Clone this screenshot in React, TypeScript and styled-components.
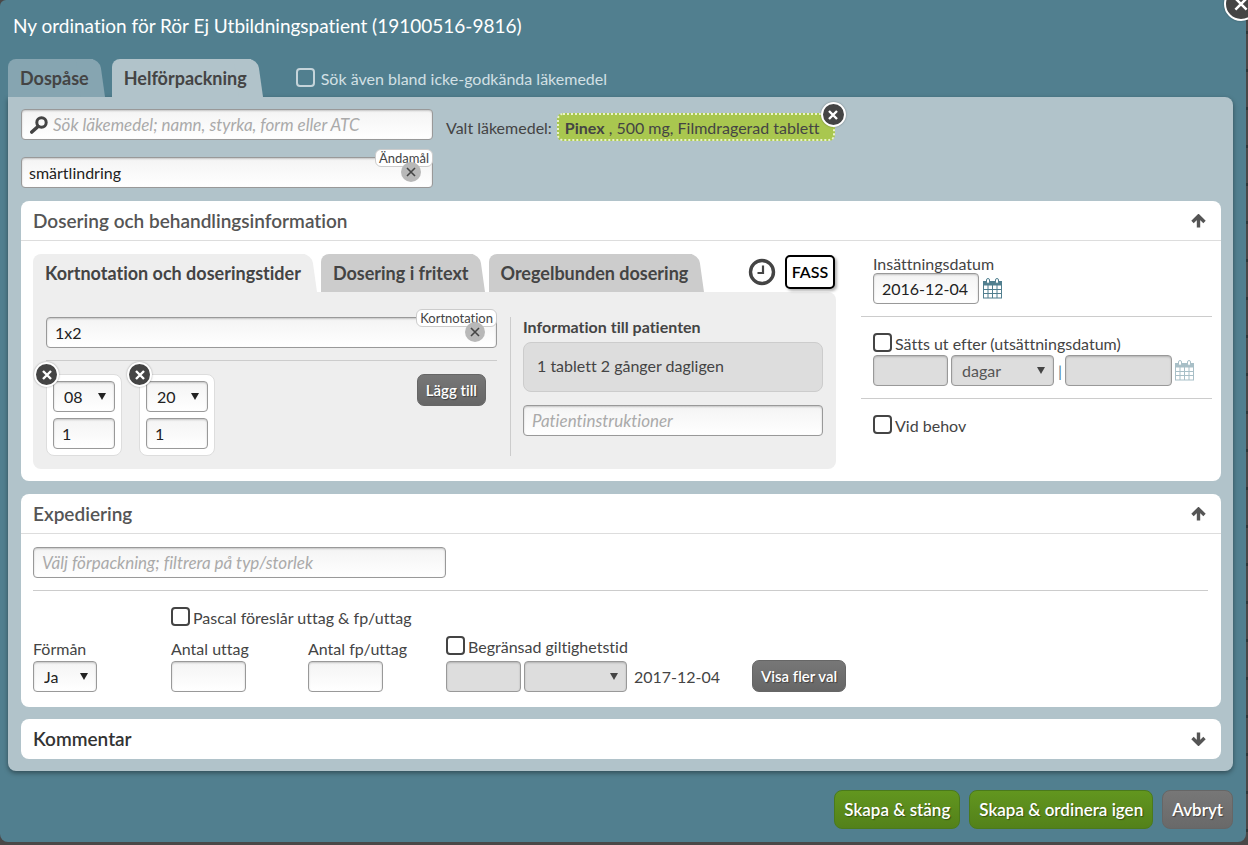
import React from 'react';
import styled, { createGlobalStyle, css } from 'styled-components';

const GlobalStyle = createGlobalStyle`
  *, *::before, *::after { box-sizing: border-box; }
  body {
    margin: 0;
    background: #4a4848;
    color: #444;
    font: 16px/20px Lato, "Liberation Sans", sans-serif;
    font-variant-ligatures: none;
  }
  button, input, select { font: inherit; font-variant-ligatures: none; color: inherit; margin: 0; }
  h1, h2, h3, p { margin: 0; }
`;

const Page = styled.div`
  min-height: 100vh;
  overflow: hidden;
  padding: 0 2px 3px 0;
  background: repeating-linear-gradient(#4a4848 0 31px, #2f3536 31px 34px, #4a4848 34px 38px);
`;

const Dialog = styled.main`
  position: relative;
  background: #517f8f;
  border-radius: 6px 0 8px 8px;
  padding: 0 13px 13px 8px;
`;

const Title = styled.h1`
  padding: 14px 5px 21px;
  font-size: 19px;
  line-height: 24px;
  font-weight: 400;
  color: #fff;
`;

const TabBar = styled.div<{ $gap: number }>`
  display: flex;
  gap: ${p => p.$gap}px;
  height: 38px;
`;

const Tab = styled.button<{ $tone: string }>`
  position: relative;
  z-index: 0;
  height: 38px;
  border: 0;
  background: none;
  padding: 0 16px 0 12px;
  font-size: 18px;
  line-height: 36px;
  font-weight: 700;
  white-space: nowrap;
  &::before, &::after {
    content: '';
    position: absolute;
    z-index: -1;
    top: 0;
    bottom: 0;
    background: ${p => p.$tone};
  }
  &::before { left: 0; right: 12px; border-radius: 8px 0 0 0; }
  &::after {
    right: 0;
    width: 24px;
    border-radius: 0 9px 0 0;
    transform: skewX(8deg);
    transform-origin: bottom;
  }
`;

const TabOption = styled.div`
  margin-left: 26px;
  padding-top: 9px;
  color: #d3e0e5;
`;

const Panel = styled.div`
  background: #b1c3ca;
  border-radius: 0 8px 8px 8px;
  padding: 12px 12px 12px 13px;
  box-shadow: 0 2px 5px rgba(0, 0, 0, 0.4);
`;

const Search = styled.div`
  display: flex;
  gap: 13px;
  margin-bottom: 13px;
`;

const SearchFields = styled.div`
  display: grid;
  gap: 17px;
  width: 412px;
`;

const field = css`
  height: 31px;
  border: 1px solid #999;
  border-radius: 4px;
  background: linear-gradient(#f4f4f4, #fff);
  box-shadow: inset 0 1px 2px rgba(0, 0, 0, 0.2);
  color: #222;
  &:disabled {
    background: #ddd;
    color: #555;
    opacity: 1;
  }
`;

const TextInput = styled.input<{ $width?: number; $inset?: number }>`
  ${field}
  display: block;
  width: ${p => (p.$width ? `${p.$width}px` : '100%')};
  padding: 0 8px 0 ${p => p.$inset ?? 8}px;
  &::placeholder { color: #aaa; font-size: 17px; font-style: italic; opacity: 1; }
`;

const FieldBox = styled.div`
  position: relative;
`;

const SearchGlyph = styled.svg`
  position: absolute;
  left: 9px;
  top: 7px;
`;

const FieldTag = styled.label`
  position: absolute;
  top: -8px;
  right: 0;
  height: 18px;
  padding: 0 3px;
  border: 1px solid #ccc;
  border-radius: 6px;
  background: #fff;
  font-size: 13px;
  line-height: 17px;
`;

const ClearButton = styled.button`
  position: absolute;
  top: 5px;
  right: 12px;
  display: grid;
  place-items: center;
  width: 20px;
  height: 20px;
  padding: 0;
  border: 0;
  border-radius: 50%;
  background: #b8b8b8;
`;

const RoundClose = styled.button`
  position: absolute;
  top: -13px;
  left: -13px;
  display: grid;
  place-items: center;
  width: 25px;
  height: 25px;
  padding: 0;
  border: 2px solid #fff;
  border-radius: 50%;
  background: #444;
  color: #fff;
  box-shadow: 0 0 2px rgba(0, 0, 0, 0.35);
`;

const DrugClose = styled(RoundClose)`
  left: auto;
  right: -13px;
`;

const DialogClose = styled(RoundClose)`
  left: auto;
  right: -12px;
  width: 34px;
  height: 34px;
`;

const Chosen = styled.div`
  display: flex;
  gap: 5px;
  height: 28px;
  margin-top: 4px;
  line-height: 30px;
  white-space: nowrap;
`;

const Drug = styled.div`
  position: relative;
  padding: 0 13px 0 6px;
  border: 2px dotted #e9f3c8;
  border-radius: 6px;
  background: #a9c74f;
  line-height: 26px;
`;

const Section = styled.section<{ $gap?: number }>`
  margin-bottom: ${p => p.$gap ?? 0}px;
  border-radius: 8px;
  background: #fff;
`;

const SectionHead = styled.header<{ $open?: boolean }>`
  display: flex;
  align-items: center;
  justify-content: space-between;
  height: 40px;
  padding: 0 15px 0 12px;
  border-bottom: ${p => (p.$open ? '1px solid #ddd' : '0')};
`;

const SectionTitle = styled.h2<{ $dark?: boolean }>`
  font-size: 19px;
  line-height: 24px;
  font-weight: 600;
  color: ${p => (p.$dark ? '#333' : '#555')};
`;

const IconButton = styled.button`
  display: grid;
  place-items: center;
  padding: 0;
  border: 0;
  background: none;
`;

const Dosage = styled.div`
  display: grid;
  grid-template-columns: minmax(0, 1fr) 351px;
  gap: 25px;
  padding: 13px 9px 12px 12px;
`;

const TabTools = styled.div`
  display: flex;
  align-items: center;
  gap: 9px;
  height: 36px;
  margin-left: auto;
  padding-right: 1px;
`;

const Fass = styled.button`
  width: 50px;
  height: 34px;
  padding: 0;
  border: 2px solid #000;
  border-radius: 5px;
  background: #fff;
  box-shadow: 2px 2px 3px rgba(0, 0, 0, 0.3);
  color: #000;
  font-weight: 600;
`;

const DosePanel = styled.div`
  display: grid;
  grid-template-columns: minmax(0, 1fr) 313px;
  gap: 13px;
  padding: 25px 13px 13px;
  border-radius: 0 8px 8px 8px;
  background: #eee;
`;

const Rule = styled.hr<{ $below?: number }>`
  width: 100%;
  height: 1px;
  margin: 12px 0 ${p => p.$below ?? 13}px;
  border: 0;
  background: #ccc;
`;

const DoseRow = styled.div`
  display: flex;
  align-items: flex-start;
  gap: 17px;
`;

const DoseCard = styled.div`
  position: relative;
  display: grid;
  gap: 6px;
  padding: 6px;
  border: 1px solid #ddd;
  border-radius: 8px;
  background: #fff;
`;

const SelectBox = styled.div<{ $disabled?: boolean }>`
  position: relative;
  &::after {
    content: '';
    position: absolute;
    right: 9px;
    top: 12px;
    border: 4px solid transparent;
    border-top: 7px solid ${p => (p.$disabled ? '#444' : '#222')};
    border-bottom: 0;
    pointer-events: none;
  }
`;

const Select = styled.select<{ $width: number }>`
  ${field}
  display: block;
  appearance: none;
  width: ${p => p.$width}px;
  padding: 0 18px 0 10px;
`;

const GreyButton = styled.button`
  height: 32px;
  padding: 0 8px;
  border: 1px solid #666;
  border-radius: 7px;
  background: linear-gradient(#777, #666);
  color: #fff;
  font-size: 15px;
  font-weight: 600;
  text-shadow: 1px 1px 1px rgba(0, 0, 0, 0.4);
  white-space: nowrap;
`;

const AddButton = styled(GreyButton)`
  margin: 0 11px 0 auto;
`;

const PatientInfo = styled.div`
  padding-left: 12px;
  border-left: 1px solid #ccc;
`;

const InfoTitle = styled.h3`
  font-size: 16px;
  line-height: 20px;
  font-weight: 700;
  margin-bottom: 5px;
`;

const InfoText = styled.p`
  margin-bottom: 13px;
  padding: 13px 13px 15px;
  border: 1px solid #ccc;
  border-radius: 8px;
  background: #ddd;
`;

const Dates = styled.div`
  display: flex;
  flex-direction: column;
`;

const DateGroup = styled.div`
  padding-left: 12px;
`;

const Controls = styled.div<{ $gap?: number }>`
  display: flex;
  align-items: center;
  gap: ${p => p.$gap ?? 3}px;
`;

const Label = styled.label`
  display: block;
  height: 19px;
  white-space: nowrap;
`;

const CheckLabel = styled.label<{ $gap?: number }>`
  display: flex;
  align-items: flex-start;
  gap: ${p => p.$gap ?? 3}px;
  height: 22px;
  line-height: 22px;
  white-space: nowrap;
`;

const Check = styled.input<{ $light?: boolean }>`
  appearance: none;
  width: 19px;
  height: 19px;
  border: 2px solid ${p => (p.$light ? '#c5d4da' : '#444')};
  border-radius: 4px;
  background: ${p => (p.$light ? 'transparent' : '#fff')};
  &:checked { background: #517f8f; }
`;

const Bar = styled.span`
  padding-left: 1px;
  color: #517f8f;
`;

const Dispense = styled.div`
  padding: 13px 13px 15px 12px;
`;

const DispenseGrid = styled.div`
  display: grid;
  grid-template-columns: 138px 137px 138px 306px 1fr;
  align-items: end;
  justify-items: start;
`;

const Suggest = styled.div`
  grid-column: 2 / -1;
  margin-bottom: 7px;
`;

const Stack = styled.div`
  display: grid;
  gap: 3px;
`;

const Until = styled.span`
  padding-left: 4px;
`;

const Footer = styled.footer`
  display: flex;
  justify-content: flex-end;
  gap: 9px;
  padding-top: 19px;
`;

const Action = styled.button<{ $green?: boolean }>`
  height: 39px;
  padding: 0 9px;
  border: 1px solid ${p => (p.$green ? '#4a7a1c' : '#666')};
  border-radius: 8px;
  background: ${p => (p.$green ? 'linear-gradient(#62961f, #53811a)' : 'linear-gradient(#777, #696969)')};
  color: #fff;
  font-size: 17px;
  font-weight: 600;
  text-shadow: 1px 1px 1px rgba(0, 0, 0, 0.4);
  white-space: nowrap;
`;

const Cross = ({ size = 10, weight = 2.4 }: { size?: number; weight?: number }) => (
  <svg width={size} height={size} viewBox="0 0 10 10" aria-hidden="true">
    <path d="M1 1L9 9M9 1L1 9" stroke="currentColor" strokeWidth={weight} fill="none" />
  </svg>
);

const Arrow = ({ down }: { down?: boolean }) => (
  <svg width="15" height="14" viewBox="0 0 15 14" aria-hidden="true">
    <path
      d={down ? 'M7.5 0.5V12M1.5 6L7.5 12L13.5 6' : 'M7.5 13.5V2M1.5 8L7.5 2L13.5 8'}
      stroke="#555"
      strokeWidth="3.4"
      fill="none"
    />
  </svg>
);

const Calendar = ({ color }: { color: string }) => (
  <svg width="20" height="21" viewBox="0 0 20 21" aria-hidden="true">
    <rect x="0.5" y="3.5" width="18" height="16.5" fill="#fff" stroke={color} />
    <path d="M0 3H19V7.5H0Z" fill={color} />
    <path d="M0 11.5H19M0 15.5H19M5 7V20M9.5 7V20M14 7V20" stroke={color} />
    <rect x="3.5" y="0.5" width="3" height="5" rx="1.5" fill="#fff" stroke={color} />
    <rect x="12.5" y="0.5" width="3" height="5" rx="1.5" fill="#fff" stroke={color} />
  </svg>
);

export default function App() {
  return (
    <>
      <GlobalStyle />
      <Page>
        <Dialog>
          <DialogClose aria-label="Stäng"><Cross size={14} weight={1.8} /></DialogClose>
          <Title>Ny ordination för Rör Ej Utbildningspatient (19100516-9816)</Title>
          <TabBar $gap={7}>
            <Tab $tone="#86a5b1">Dospåse</Tab>
            <Tab $tone="#b1c3ca">Helförpackning</Tab>
            <TabOption>
              <CheckLabel $gap={6}>
                <Check type="checkbox" $light />
                Sök även bland icke-godkända läkemedel
              </CheckLabel>
            </TabOption>
          </TabBar>
          <Panel>
            <Search>
              <SearchFields>
                <FieldBox>
                  <TextInput $inset={31} aria-label="Sök läkemedel" placeholder="Sök läkemedel; namn, styrka, form eller ATC" />
                  <SearchGlyph width="19" height="18" viewBox="0 0 19 18" aria-hidden="true">
                    <circle cx="11.5" cy="6.5" r="4.7" stroke="#444" strokeWidth="3" fill="none" />
                    <path d="M8 10.5L1.8 16" stroke="#444" strokeWidth="3.6" strokeLinecap="round" />
                  </SearchGlyph>
                </FieldBox>
                <FieldBox>
                  <TextInput id="purpose" $inset={7} defaultValue="smärtlindring" />
                  <FieldTag htmlFor="purpose">Ändamål</FieldTag>
                  <ClearButton aria-label="Rensa ändamål"><Cross weight={1.6} /></ClearButton>
                </FieldBox>
              </SearchFields>
              <Chosen>
                <span>Valt läkemedel:</span>
                <Drug>
                  <b>Pinex</b> , 500 mg, Filmdragerad tablett
                  <DrugClose aria-label="Ta bort läkemedel"><Cross /></DrugClose>
                </Drug>
              </Chosen>
            </Search>

            <Section $gap={13}>
              <SectionHead $open>
                <SectionTitle>Dosering och behandlingsinformation</SectionTitle>
                <IconButton aria-label="Fäll ihop"><Arrow /></IconButton>
              </SectionHead>
              <Dosage>
                <div>
                  <TabBar $gap={4}>
                    <Tab $tone="#eee">Kortnotation och doseringstider</Tab>
                    <Tab $tone="#ccc">Dosering i fritext</Tab>
                    <Tab $tone="#ccc">Oregelbunden dosering</Tab>
                    <TabTools>
                      <IconButton aria-label="Doseringstider">
                        <svg width="28" height="28" viewBox="0 0 28 28" aria-hidden="true">
                          <circle cx="14" cy="14" r="11.5" stroke="#444" strokeWidth="3.4" fill="none" />
                          <path d="M15 7.5V15H9.5" stroke="#444" strokeWidth="2.2" fill="none" />
                        </svg>
                      </IconButton>
                      <Fass>FASS</Fass>
                    </TabTools>
                  </TabBar>
                  <DosePanel>
                    <div>
                      <FieldBox>
                        <TextInput id="notation" defaultValue="1x2" />
                        <FieldTag htmlFor="notation">Kortnotation</FieldTag>
                        <ClearButton aria-label="Rensa kortnotation"><Cross weight={1.6} /></ClearButton>
                      </FieldBox>
                      <Rule />
                      <DoseRow>
                        {['08', '20'].map(hour => (
                          <DoseCard key={hour}>
                            <SelectBox>
                              <Select $width={62} aria-label="Klockslag" defaultValue={hour}>
                                <option>{hour}</option>
                              </Select>
                            </SelectBox>
                            <TextInput $width={62} aria-label="Antal" defaultValue="1" />
                            <RoundClose aria-label="Ta bort doseringstid"><Cross /></RoundClose>
                          </DoseCard>
                        ))}
                        <AddButton>Lägg till</AddButton>
                      </DoseRow>
                    </div>
                    <PatientInfo>
                      <InfoTitle>Information till patienten</InfoTitle>
                      <InfoText>1 tablett 2 gånger dagligen</InfoText>
                      <TextInput aria-label="Patientinstruktioner" placeholder="Patientinstruktioner" />
                    </PatientInfo>
                  </DosePanel>
                </div>
                <Dates>
                  <DateGroup>
                    <Label htmlFor="start">Insättningsdatum</Label>
                    <Controls $gap={4}>
                      <TextInput id="start" $width={106} defaultValue="2016-12-04" />
                      <IconButton aria-label="Välj datum"><Calendar color="#517f8f" /></IconButton>
                    </Controls>
                  </DateGroup>
                  <Rule $below={16} />
                  <DateGroup>
                    <CheckLabel>
                      <Check type="checkbox" />
                      Sätts ut efter (utsättningsdatum)
                    </CheckLabel>
                    <Controls>
                      <TextInput $width={75} disabled aria-label="Antal" />
                      <SelectBox $disabled>
                        <Select $width={103} disabled aria-label="Enhet"><option>dagar</option></Select>
                      </SelectBox>
                      <Bar>|</Bar>
                      <TextInput $width={107} disabled aria-label="Utsättningsdatum" />
                      <IconButton disabled aria-label="Välj utsättningsdatum"><Calendar color="#a8bfc7" /></IconButton>
                    </Controls>
                  </DateGroup>
                  <Rule $below={16} />
                  <DateGroup>
                    <CheckLabel>
                      <Check type="checkbox" />
                      Vid behov
                    </CheckLabel>
                  </DateGroup>
                </Dates>
              </Dosage>
            </Section>

            <Section $gap={12}>
              <SectionHead $open>
                <SectionTitle>Expediering</SectionTitle>
                <IconButton aria-label="Fäll ihop"><Arrow /></IconButton>
              </SectionHead>
              <Dispense>
                <TextInput $width={413} aria-label="Förpackning" placeholder="Välj förpackning; filtrera på typ/storlek" />
                <Rule $below={16} />
                <DispenseGrid>
                  <Suggest>
                    <CheckLabel>
                      <Check type="checkbox" />
                      Pascal föreslår uttag &amp; fp/uttag
                    </CheckLabel>
                  </Suggest>
                  <Stack>
                    <Label htmlFor="benefit">Förmån</Label>
                    <SelectBox>
                      <Select id="benefit" $width={64}><option>Ja</option></Select>
                    </SelectBox>
                  </Stack>
                  <Stack>
                    <Label htmlFor="draws">Antal uttag</Label>
                    <TextInput id="draws" $width={75} />
                  </Stack>
                  <Stack>
                    <Label htmlFor="packs">Antal fp/uttag</Label>
                    <TextInput id="packs" $width={75} />
                  </Stack>
                  <Stack>
                    <CheckLabel>
                      <Check type="checkbox" />
                      Begränsad giltighetstid
                    </CheckLabel>
                    <Controls>
                      <TextInput $width={75} disabled aria-label="Giltighetstid" />
                      <SelectBox $disabled>
                        <Select $width={103} disabled aria-label="Tidsenhet"><option></option></Select>
                      </SelectBox>
                      <Until>2017-12-04</Until>
                    </Controls>
                  </Stack>
                  <GreyButton>Visa fler val</GreyButton>
                </DispenseGrid>
              </Dispense>
            </Section>

            <Section>
              <SectionHead>
                <SectionTitle $dark>Kommentar</SectionTitle>
                <IconButton aria-label="Fäll ut"><Arrow down /></IconButton>
              </SectionHead>
            </Section>
          </Panel>
          <Footer>
            <Action $green>Skapa &amp; stäng</Action>
            <Action $green>Skapa &amp; ordinera igen</Action>
            <Action>Avbryt</Action>
          </Footer>
        </Dialog>
      </Page>
    </>
  );
}
